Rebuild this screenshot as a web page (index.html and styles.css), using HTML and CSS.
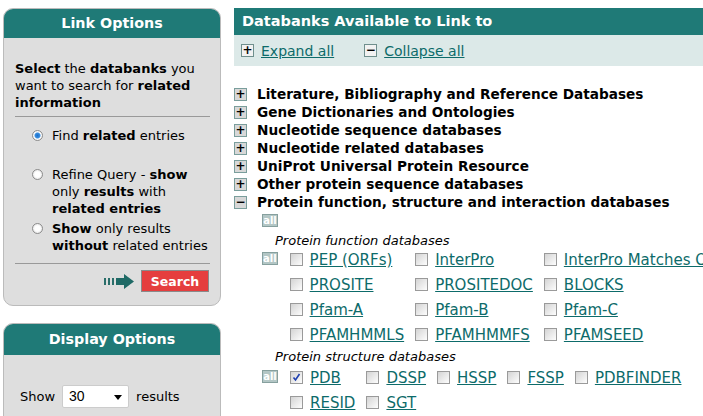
FILE: index.html
```html
<!DOCTYPE html>
<html>
<head>
  <link rel="stylesheet" href="styles.css">
</head>
<body>
<div class="page">
  <div class="side">
    <div class="panel">
      <div class="panel-head">Link Options</div>
      <div class="panel-body">
        <p class="intro"><b>Select</b> the <b>databanks</b> you want to search for <b>related information</b></p>
        <hr class="rule-top">
        <label class="opt opt-first"><input type="radio" name="mode" checked><span>Find <b>related</b> entries</span></label>
        <label class="opt opt-gap"><input type="radio" name="mode"><span>Refine Query - <b>show</b> only <b>results</b> with <b>related entries</b></span></label>
        <label class="opt"><input type="radio" name="mode"><span><b>Show</b> only results <b>without</b> related entries</span></label>
        <hr class="rule-bottom">
        <div class="go">
          <svg class="arrow" width="31" height="16" viewBox="0 0 31 16">
            <rect x="0" y="5" width="2" height="7" fill="#2a6e6a"/>
            <rect x="4" y="5" width="2" height="7" fill="#2a6e6a"/>
            <rect x="8" y="5" width="2" height="7" fill="#2a6e6a"/>
            <path d="M12 5h8V1l10 7.5-10 7.5v-4h-8z" fill="#1f6a66"/>
          </svg>
          <button class="search">Search</button>
        </div>
      </div>
    </div>
    <div class="panel panel-display">
      <div class="panel-head">Display Options</div>
      <div class="panel-body display-body">
        <span>Show</span>
        <span class="select">30<i class="caret"></i></span>
        <span>results</span>
      </div>
    </div>
  </div>

  <div class="main">
    <div class="main-head">Databanks Available to Link to</div>
    <div class="toolbar">
      <span class="tb-item"><i class="box">+</i><a href="#">Expand all</a></span>
      <span class="tb-item"><i class="box">&minus;</i><a href="#">Collapse all</a></span>
    </div>
    <ul class="tree">
      <li><i class="box">+</i>Literature, Bibliography and Reference Databases</li>
      <li><i class="box">+</i>Gene Dictionaries and Ontologies</li>
      <li><i class="box">+</i>Nucleotide sequence databases</li>
      <li><i class="box">+</i>Nucleotide related databases</li>
      <li><i class="box">+</i>UniProt Universal Protein Resource</li>
      <li><i class="box">+</i>Other protein sequence databases</li>
      <li><i class="box">&minus;</i>Protein function, structure and interaction databases</li>
    </ul>
    <div class="group">
      <span class="all">all</span>
      <div class="sub-title">Protein function databases</div>
      <div class="dbs dbs-first">
        <span class="all">all</span>
        <table class="db-table">
          <tr><td><input type="checkbox"><a href="#">PEP (ORFs)</a></td><td><input type="checkbox"><a href="#">InterPro</a></td><td><input type="checkbox"><a href="#">InterPro Matches Only</a></td></tr>
          <tr><td><input type="checkbox"><a href="#">PROSITE</a></td><td><input type="checkbox"><a href="#">PROSITEDOC</a></td><td><input type="checkbox"><a href="#">BLOCKS</a></td></tr>
          <tr><td><input type="checkbox"><a href="#">Pfam-A</a></td><td><input type="checkbox"><a href="#">Pfam-B</a></td><td><input type="checkbox"><a href="#">Pfam-C</a></td></tr>
          <tr><td><input type="checkbox"><a href="#">PFAMHMMLS</a></td><td><input type="checkbox"><a href="#">PFAMHMMFS</a></td><td><input type="checkbox"><a href="#">PFAMSEED</a></td></tr>
        </table>
      </div>
      <div class="sub-title sub-title-tight">Protein structure databases</div>
      <div class="dbs">
        <span class="all">all</span>
        <table class="db-table">
          <tr><td><input type="checkbox" checked><a href="#">PDB</a></td><td><input type="checkbox"><a href="#">DSSP</a></td><td><input type="checkbox"><a href="#">HSSP</a></td><td><input type="checkbox"><a href="#">FSSP</a></td><td><input type="checkbox"><a href="#">PDBFINDER</a></td></tr>
          <tr><td><input type="checkbox"><a href="#">RESID</a></td><td><input type="checkbox"><a href="#">SGT</a></td><td></td><td></td><td></td></tr>
        </table>
      </div>
    </div>
  </div>
</div>
</body>
</html>
```

FILE: styles.css
```css
body { margin: 0; font-family: "DejaVu Sans", Verdana, sans-serif; font-size: 13px; color: #000; background: #fff; overflow: hidden; }
.page { display: flex; padding-top: 8px; }
.side { width: 218px; margin-left: 3px; flex: none; }
.main { flex: 1; margin-left: 13px; white-space: nowrap; overflow: hidden; }

.panel { background: #dedede; border: 1px solid #bbb; border-radius: 10px; overflow: hidden; }
.panel-head { background: #1f7a77; color: #fff; font-weight: bold; font-size: 14.3px; text-align: center; height: 29px; line-height: 29px; }
.panel-body { padding: 22px 10px 13px 11px; }
.intro { margin: 0; line-height: 17px; }
.panel hr { border: 0; border-top: 1px solid #999; }
.rule-top { margin: 5px 0 10px; }
.rule-bottom { margin: 9px 0 6px; }
.opt { display: flex; align-items: flex-start; line-height: 17px; padding-left: 17px; }
.opt input { appearance: none; margin: 3px 9px 0 0; width: 11px; height: 11px; flex: none; border: 1px solid #8c8c8c; border-radius: 50%; background: radial-gradient(circle, #fff 0, #fff 40%, #d6d6d6 100%); }
.opt input:checked { background: radial-gradient(circle, #1c6fc8 0, #3a8ee0 2.5px, #fff 3.5px, #fff 40%, #d6d6d6 100%); }
.opt-first { margin-bottom: 22px; }
.opt-gap { margin-bottom: 3px; }
.go { display: flex; justify-content: flex-end; align-items: center; gap: 6px; padding-right: 1px; }
.search { background: #e53e3e; color: #fff; font-family: "DejaVu Sans", sans-serif; font-weight: bold; font-size: 12.5px; border: 1px solid #8a8a8a; padding: 0; width: 68px; height: 22px; }

.panel-display { margin-top: 17px; height: 120px; }
.panel-display .panel-head { height: 31px; line-height: 31px; }
.display-body { padding: 30px 10px 0 16px; display: flex; align-items: center; gap: 7px; font-size: 13px; }
.select { position: relative; display: inline-block; width: 59px; height: 21px; line-height: 20px; padding-left: 6px; background: #fff; border: 1px solid #ccc; border-radius: 2px; font-family: "Liberation Sans", sans-serif; font-size: 14px; }
.caret { position: absolute; right: 6px; top: 9px; border: 4px solid transparent; border-top: 5px solid #000; border-bottom: 0; }

.main-head { background: #1f7a77; color: #fff; font-weight: bold; font-size: 14.5px; height: 27px; line-height: 27px; padding-left: 8px; }
.toolbar { background: #dce9e8; height: 31px; display: flex; align-items: center; gap: 30px; padding-left: 7px; font-size: 14px; }
.tb-item { display: flex; align-items: center; gap: 7px; }
a { color: #0d6b6a; }
.box { display: inline-block; width: 11px; height: 11px; line-height: 10px; border: 1px solid #6f8f8d; background: #f2f2f2; color: #000; font-style: normal; font-weight: bold; font-size: 12px; text-align: center; box-sizing: content-box; }
.tree { list-style: none; margin: 19px 0 0; padding: 0; font-weight: bold; font-size: 13.65px; }
.tree li { display: flex; align-items: center; height: 18px; gap: 10px; }
.tree .box { background: #d8d8d8; border-color: #7a9e9c; }
.group { padding-left: 28px; }
.all { display: inline-block; width: 16px; height: 13px; line-height: 11px; background: #b3c6c5; border: 1px solid #86a09e; color: #fff; font-size: 10px; font-weight: bold; text-align: center; box-sizing: border-box; margin-top: 3px; }
.sub-title { font-style: italic; font-size: 13px; margin: 5px 0 0 13px; height: 17px; line-height: 17px; }
.sub-title-tight { margin-top: 1px; }
.dbs { display: flex; align-items: flex-start; gap: 12px; }
.dbs-first { margin-top: -2px; }
.dbs .all { margin-top: 5px; }
.db-table { border-collapse: collapse; font-size: 15px; }
.db-table td { padding: 0 11px 0 0; height: 25px; vertical-align: middle; white-space: nowrap; }
.db-table input { appearance: none; width: 13px; height: 13px; margin: 0 7px 0 0; vertical-align: -1px; border: 1px solid #9a9a9a; background: linear-gradient(135deg, #d4d4d4, #fdfdfd); }
.db-table input:checked { background: url("data:image/svg+xml,%3Csvg xmlns='http://www.w3.org/2000/svg' width='11' height='11'%3E%3Cpath d='M2.5 5.5l2 2.5 4-6' fill='none' stroke='%231e3fb0' stroke-width='1.6'/%3E%3C/svg%3E") center no-repeat, linear-gradient(135deg, #d4d4d4, #fdfdfd); }
```
